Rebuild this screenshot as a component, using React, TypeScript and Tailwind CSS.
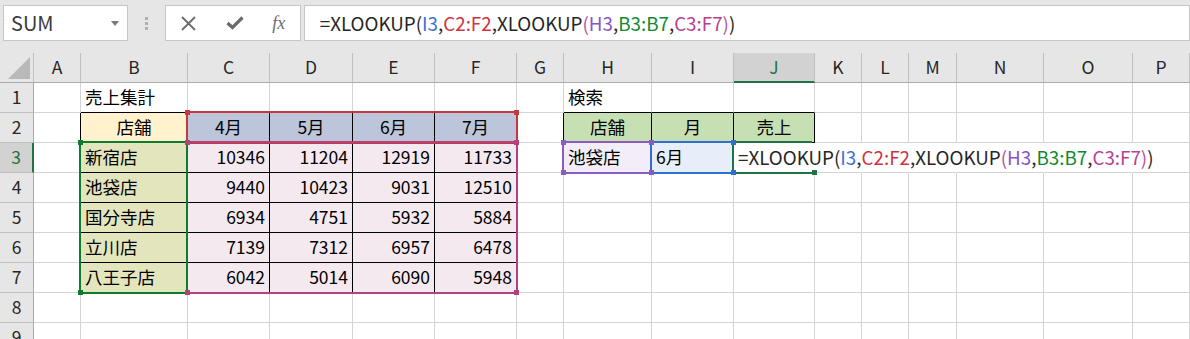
import React from "react";

type Cell = {
  t?: React.ReactNode;
  align?: "l" | "c" | "r";
  bg?: string;
  r?: boolean;
  b?: boolean;
  noR?: boolean;
};

const COLS = ["A", "B", "C", "D", "E", "F", "G", "H", "I", "J", "K", "L", "M", "N", "O", "P"];
const ROWS = [1, 2, 3, 4, 5, 6, 7, 8, 9];
const GRID =
  "grid grid-cols-[34px_47px_107px_82px_83px_82px_82px_47px_88px_82px_81px_47px_47px_48px_87px_89px_1fr]";

const stores = [
  ["新宿店", "10346", "11204", "12919", "11733"],
  ["池袋店", "9440", "10423", "9031", "12510"],
  ["国分寺店", "6934", "4751", "5932", "5884"],
  ["立川店", "7139", "7312", "6957", "6478"],
  ["八王子店", "6042", "5014", "6090", "5948"],
];

function Formula() {
  return (
    <span className="text-[18.8px] text-[#262626]">
      =XLOOKUP(<span className="text-[#3a72d0]">I3</span>,
      <span className="text-[#d0353f]">C2:F2</span>,XLOOKUP
      <span className="text-[#c0509a]">(</span>
      <span className="text-[#8a52c4]">H3</span>,
      <span className="text-[#118a2e]">B3:B7</span>,
      <span className="text-[#b7408f]">C3:F7</span>
      <span className="text-[#c0509a]">)</span>)
    </span>
  );
}

// sheet contents
const cells: Record<string, Cell> = {};
const set = (k: string, c: Cell) => (cells[k] = { ...cells[k], ...c });

set("B1", { t: "売上集計" });
set("H1", { t: "検索" });
["B", "C", "D", "E", "F", "H", "I", "J"].forEach((c) => set(c + "1", { b: true }));
[2, 3, 4, 5, 6, 7].forEach((r) => set("A" + r, { r: true }));
set("G2", { r: true });
set("G3", { r: true });

set("B2", { t: "店舗", align: "c", bg: "bg-[#fff2cc]", r: true, b: true });
["4月", "5月", "6月", "7月"].forEach((m, i) =>
  set(COLS[2 + i] + "2", { t: m, align: "c", bg: "bg-[#bcc5da]", r: true, b: true })
);
stores.forEach((row, i) => {
  const r = 3 + i;
  set("B" + r, { t: row[0], bg: "bg-[#e3e5bd]", r: true, b: true });
  row.slice(1).forEach((v, j) =>
    set(COLS[2 + j] + r, { t: v, align: "r", bg: "bg-[#f5e9f0]", r: true, b: true })
  );
});

set("H2", { t: "店舗", align: "c", bg: "bg-[#c6e0b4]", r: true, b: true });
set("I2", { t: "月", align: "c", bg: "bg-[#c6e0b4]", r: true, b: true });
set("J2", { t: "売上", align: "c", bg: "bg-[#c6e0b4]", r: true, b: true });
set("H3", { t: "池袋店", bg: "bg-[#f2edf8]", r: true, b: true });
set("I3", { t: "6月", bg: "bg-[#e8eef9]", r: true, b: true });
set("J3", { t: <Formula />, noR: true });
["K", "L", "M", "N", "O"].forEach((c) => set(c + "3", { noR: true }));

const alignCls = { l: "justify-start", c: "justify-center", r: "justify-end" };

function Handle({ pos, color }: { pos: string; color: string }) {
  return <div className={`absolute w-[5px] h-[5px] ${pos} ${color}`} />;
}

export default function App() {
  return (
    <div className="relative w-[1190px] h-[339px] overflow-hidden bg-white [font-family:'Noto_Sans_CJK_JP',sans-serif]">
      {/* formula bar */}
      <div className="h-[53px] bg-[#e6e6e6] flex items-start pt-[5px] pl-[3px]">
        <div className="w-[127px] h-[36px] bg-white border border-[#c6c6c6] flex items-center justify-between pl-[7px] pr-[8px]">
          <span className="text-[20px] text-[#3b3b3b]">SUM</span>
          <svg width="8" height="5" viewBox="0 0 8 5">
            <path d="M0 0 H8 L4 5 Z" fill="#7a7a7a" />
          </svg>
        </div>
        <div className="w-[37px] h-[36px] flex flex-col items-center justify-center gap-[2px]">
          <div className="w-[3px] h-[3px] bg-[#b0b0b0]" />
          <div className="w-[3px] h-[3px] bg-[#b0b0b0]" />
          <div className="w-[3px] h-[3px] bg-[#b0b0b0]" />
        </div>
        <div className="w-[137px] h-[36px] bg-white border border-[#c6c6c6] flex items-center">
          <div className="w-[46px] flex justify-center">
            <svg width="15" height="15" viewBox="0 0 15 15">
              <path d="M1 1 L14 14 M14 1 L1 14" stroke="#6b6b6b" strokeWidth="1.8" />
            </svg>
          </div>
          <div className="w-[46px] flex justify-center">
            <svg width="18" height="14" viewBox="0 0 18 14">
              <path d="M1.5 7 L6.5 11.5 L16.5 1.5" stroke="#6b6b6b" strokeWidth="3.2" fill="none" />
            </svg>
          </div>
          <div className="w-[42px] flex justify-center">
            <span className="text-[18px] italic text-[#6b6b6b] [font-family:'Liberation_Serif',serif]">fx</span>
          </div>
        </div>
        <div className="ml-[3px] w-[900px] h-[36px] bg-white border border-[#c6c6c6] flex items-center pl-[15px] whitespace-nowrap">
          <Formula />
        </div>
      </div>

      {/* column headers */}
      <div className={`${GRID} h-[30px] bg-[#e6e6e6]`}>
        <div className="border-r border-r-[#c0c0c0] border-b border-b-[#ababab] relative">
          <svg className="absolute left-0 top-0" width="34" height="29" viewBox="0 0 34 29">
            <polygon points="30,4 30,26 8,26" fill="#b9b9b9" />
          </svg>
        </div>
        {COLS.map((c) =>
          c === "J" ? (
            <div
              key={c}
              className="flex items-center justify-center text-[17.5px] text-[#217346] bg-[#d2d2d2] border-r border-r-[#c0c0c0] border-b-2 border-b-[#217346]"
            >
              {c}
            </div>
          ) : (
            <div
              key={c}
              className="flex items-center justify-center text-[17.5px] text-[#262626] border-r border-r-[#c0c0c0] border-b border-b-[#ababab]"
            >
              {c}
            </div>
          )
        )}
      </div>

      {/* body rows */}
      {ROWS.map((r) => (
        <div key={r} className={`${GRID} h-[30px]`}>
          {r === 3 ? (
            <div className="flex items-center justify-center text-[17.5px] text-[#217346] bg-[#d2d2d2] border-r-2 border-r-[#217346] border-b border-b-[#c0c0c0]">
              {r}
            </div>
          ) : (
            <div className="flex items-center justify-center text-[17.5px] text-[#262626] bg-[#e6e6e6] border-r border-r-[#ababab] border-b border-b-[#c0c0c0]">
              {r}
            </div>
          )}
          {COLS.map((c) => {
            const cell = cells[c + r] || {};
            const rc = cell.noR ? "border-r-transparent" : cell.r ? "border-r-black" : "border-r-[#d4d4d4]";
            const bc = cell.b ? "border-b-black" : "border-b-[#d4d4d4]";
            return (
              <div
                key={c}
                className={`relative z-10 flex items-center whitespace-nowrap px-[4px] text-[17.5px] text-black border-r border-b ${rc} ${bc} ${
                  cell.bg || ""
                } ${alignCls[cell.align || "l"]}`}
              >
                {cell.t}
              </div>
            );
          })}
        </div>
      ))}

      {/* range highlights */}
      <div className="absolute left-[186px] top-[111px] w-[332px] h-[33px] border-2 border-[#c8373e] z-20" />
      <div className="absolute left-[186px] top-[141px] w-[332px] h-[153px] border-2 border-[#b1427f] z-20" />
      <div className="absolute left-[79px] top-[141px] w-[109px] h-[153px] border-2 border-[#0f7b2f] z-20" />
      <div className="absolute left-[562px] top-[141px] w-[90px] h-[33px] border-2 border-[#8a5cc0] z-20" />
      <div className="absolute left-[650px] top-[141px] w-[84px] h-[33px] border-2 border-[#2e6fd0] z-20" />
      <div className="absolute left-[732px] top-[141px] w-[80px] h-[33px] border-l-2 border-t-2 border-b-2 border-[#217346] z-20" />

      <div className="absolute inset-0 z-30 pointer-events-none">
        <Handle pos="left-[185px] top-[110px]" color="bg-[#c8373e]" />
        <Handle pos="left-[514px] top-[110px]" color="bg-[#c8373e]" />
        <Handle pos="left-[78px] top-[140px]" color="bg-[#0f7b2f]" />
        <Handle pos="left-[78px] top-[290px]" color="bg-[#0f7b2f]" />
        <Handle pos="left-[185px] top-[140px]" color="bg-[#b1427f]" />
        <Handle pos="left-[514px] top-[140px]" color="bg-[#b1427f]" />
        <Handle pos="left-[185px] top-[290px]" color="bg-[#b1427f]" />
        <Handle pos="left-[514px] top-[290px]" color="bg-[#b1427f]" />
        <Handle pos="left-[561px] top-[140px]" color="bg-[#8a5cc0]" />
        <Handle pos="left-[561px] top-[170px]" color="bg-[#8a5cc0]" />
        <Handle pos="left-[649px] top-[140px]" color="bg-[#8a5cc0]" />
        <Handle pos="left-[649px] top-[170px]" color="bg-[#8a5cc0]" />
        <Handle pos="left-[731px] top-[140px]" color="bg-[#2e6fd0]" />
        <Handle pos="left-[731px] top-[170px]" color="bg-[#2e6fd0]" />
        <Handle pos="left-[812px] top-[170px]" color="bg-[#217346]" />
      </div>
    </div>
  );
}
